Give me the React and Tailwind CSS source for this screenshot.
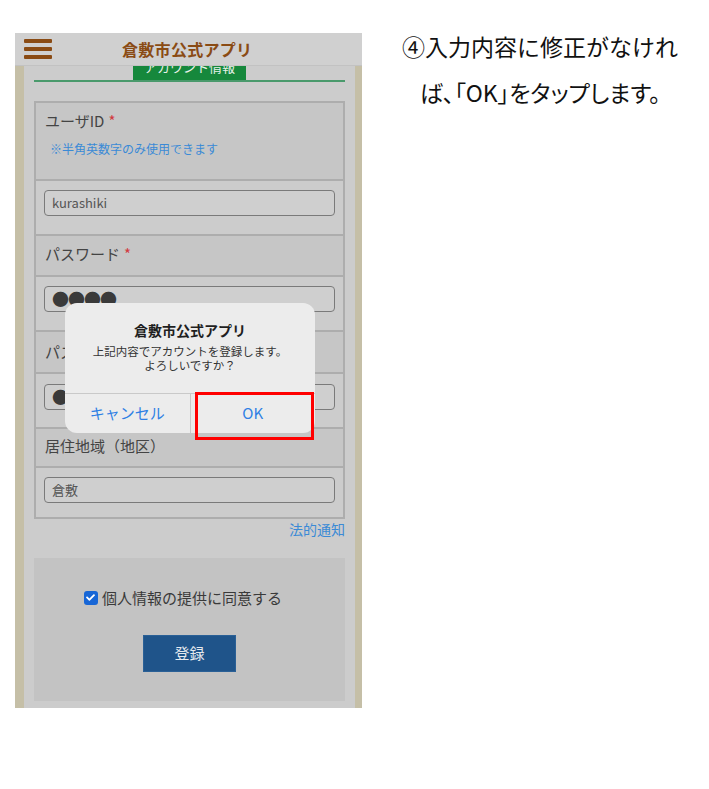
import { FaCheck } from "react-icons/fa";

const font = { fontFamily: '"Noto Sans CJK JP", "Noto Sans", sans-serif' };

function Req() {
  return <span className="ml-1 text-[#d23a3f]">*</span>;
}

function LabelRow({ children, hint, className = "" }) {
  return (
    <div className={"border-b-2 border-[#adadad] bg-[#c6c6c6] px-[9px] " + className}>
      <p className="text-[15px] leading-[20px] text-[#444]">{children}</p>
      {hint && <p className="mt-[10px] pl-[5px] text-[12px] leading-[15px] text-[#3a8ad6]">{hint}</p>}
    </div>
  );
}

function InputRow({ children, className = "", last = false }) {
  return (
    <div className={(last ? "" : "border-b-2 border-[#adadad] ") + "bg-[#cccccc] px-[8px] " + className}>
      <div className="flex h-[26px] items-center rounded-[4px] border-[1.5px] border-[#7a7a7a] bg-[#cfcfcf] px-[7px] text-[13px] text-[#555]">
        {children}
      </div>
    </div>
  );
}

function Dots() {
  return <span className="text-[17px] leading-none tracking-[-1px] text-[#3a3a3a]">●●●●</span>;
}

export default function App() {
  return (
    <div className="flex h-[789px] w-[709px] bg-white" style={font}>
      <div className="relative ml-[15px] mt-[33px] h-[675px] w-[347px] overflow-hidden bg-[#c5bfa7]">
        <div className="relative z-10 flex h-[33px] items-center border-b border-[#c2c2c2] bg-[#d0d0d0] px-[9px]">
          <div className="flex w-[28px] flex-col gap-[4px]">
            <span className="h-[4px] rounded-[1px] bg-[#8a4b14]" />
            <span className="h-[4px] rounded-[1px] bg-[#8a4b14]" />
            <span className="h-[4px] rounded-[1px] bg-[#8a4b14]" />
          </div>
          <p className="ml-[70px] text-[16px] font-bold tracking-[0.3px] text-[#8a4b14]">倉敷市公式アプリ</p>
        </div>

        <div className="ml-[9px] mr-[7px] h-[642px] bg-[#cccccc] px-[10px]">
          <div className="flex flex-col items-center">
            <div className="h-[14px] w-[113px] overflow-hidden bg-[#16883c] text-center">
              <p className="-mt-[9px] text-[13px] leading-[20px] text-[#e8f2ea]">アカウント情報</p>
            </div>
            <div className="h-[1.5px] w-full bg-[#4a9a6c]" />
          </div>

          <div className="mt-[19px] border-2 border-[#adadad]">
            <LabelRow hint="※半角英数字のみ使用できます" className="h-[78px] pt-[8px]">
              ユーザID<Req />
            </LabelRow>
            <InputRow className="h-[55px] pt-[9px]">kurashiki</InputRow>
            <LabelRow className="h-[41px] pt-[8px]">
              パスワード<Req />
            </LabelRow>
            <InputRow className="h-[55px] pt-[9px]">
              <Dots />
            </InputRow>
            <LabelRow className="h-[42px] pt-[10px]">
              パスワード（確認）<Req />
            </LabelRow>
            <InputRow className="h-[55px] pt-[10px]">
              <Dots />
            </InputRow>
            <LabelRow className="h-[39px] pt-[7px]">居住地域（地区）</LabelRow>
            <InputRow last className="h-[49px] pt-[9px]">
              倉敷
            </InputRow>
          </div>

          <p className="text-right text-[14px] leading-[20px] text-[#3a8ad6]">法的通知</p>

          <div className="mt-[19px] flex h-[143px] flex-col items-center bg-[#c3c3c3] pt-[29px]">
            <label className="flex items-center gap-[4px] pr-[13px] text-[15px] text-[#3a3a3a]">
              <span className="flex h-[14px] w-[14px] items-center justify-center rounded-[3px] bg-[#1766d6]">
                <FaCheck className="text-[9px] text-white" />
              </span>
              個人情報の提供に同意する
            </label>
            <button className="mt-[26px] h-[37px] w-[93px] border border-[#2a6096] bg-[#1f548a] text-[15px] text-[#e4e8ee]">
              登録
            </button>
          </div>
        </div>

        <div className="absolute left-[50px] top-[270px] z-20 w-[250px] overflow-hidden rounded-[12px] bg-[#ececec]">
          <div className="flex h-[90px] flex-col items-center pt-[17px]">
            <p className="text-[14px] font-bold leading-[20px] text-[#1f1f1f]">倉敷市公式アプリ</p>
            <p className="mt-[4px] text-center text-[11.5px] leading-[14px] text-[#333]">
              上記内容でアカウントを登録します。
              <br />
              よろしいですか？
            </p>
          </div>
          <div className="flex h-[40px] border-t border-[#c9c9c9]">
            <div className="flex flex-1 items-center justify-center border-r border-[#c9c9c9] text-[15px] text-[#2f80e4]">
              キャンセル
            </div>
            <div className="flex flex-1 items-center justify-center text-[15px] text-[#2f80e4]">OK</div>
          </div>
        </div>
        <div className="absolute left-[180px] top-[359px] z-30 h-[48px] w-[119px] border-[3px] border-[#ff0000]" />
      </div>

      <div className="ml-[18px] mt-[23px] w-[320px] text-center text-[23px] leading-[46px] text-[#111]">
        <p>④入力内容に修正がなけれ</p>
        <p style={{ fontFeatureSettings: '"palt"' }}>ば、「OK」をタップします。</p>
      </div>
    </div>
  );
}
